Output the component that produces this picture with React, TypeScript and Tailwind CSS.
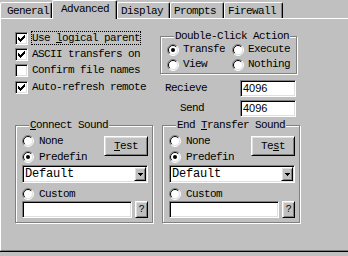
import React from "react";

const sunken =
	"bg-white border border-t-[#808080] border-l-[#808080] border-r-white border-b-white shadow-[inset_1px_1px_0_#000,inset_-1px_-1px_0_#dfdfdf]";
const raised =
	"bg-[#c0c0c0] border border-t-white border-l-white border-r-black border-b-black shadow-[inset_1px_1px_0_#dfdfdf,inset_-1px_-1px_0_#808080]";
const etched =
	"border border-[#808080] shadow-[1px_1px_0_#fff,inset_1px_1px_0_#fff]";

const Radio = ({ checked }: { checked?: boolean }) => (
	<svg width="12" height="12" viewBox="0 0 12 12" className="shrink-0">
		<circle cx="6" cy="6" r="5" fill="#fff" />
		<path d="M9.9 2.1A5.5 5.5 0 0 0 2.1 9.9" stroke="#808080" fill="none" />
		<path d="M9.9 2.1A5.5 5.5 0 0 1 2.1 9.9" stroke="#fff" fill="none" />
		<path d="M9.2 2.8A4.5 4.5 0 0 0 2.8 9.2" stroke="#000" fill="none" />
		<path d="M9.2 2.8A4.5 4.5 0 0 1 2.8 9.2" stroke="#dfdfdf" fill="none" />
		{checked && <circle cx="6" cy="6" r="2" fill="#000" />}
	</svg>
);

const Check = ({ checked }: { checked?: boolean }) => (
	<div className={`w-[13px] h-[13px] shrink-0 flex items-center justify-center ${sunken}`}>
		{checked && (
			<svg width="7" height="7" viewBox="0 0 7 7" shapeRendering="crispEdges">
				<rect x="6" y="0" width="1" height="1" />
				<rect x="5" y="1" width="2" height="1" />
				<rect x="0" y="2" width="1" height="1" />
				<rect x="4" y="2" width="3" height="1" />
				<rect x="0" y="3" width="2" height="1" />
				<rect x="3" y="3" width="3" height="1" />
				<rect x="0" y="4" width="5" height="1" />
				<rect x="1" y="5" width="3" height="1" />
				<rect x="2" y="6" width="1" height="1" />
			</svg>
		)}
	</div>
);

const Tab = ({ label, active, w, pl }: { label: string; active?: boolean; w: string; pl: string }) => (
	<div
		className={`${w} ${pl} bg-[#c0c0c0] border-t border-l border-r border-t-white border-l-white border-r-black shadow-[inset_-1px_0_0_#808080] rounded-t-[2px] leading-[12px] whitespace-nowrap ${
			active ? "h-[19px] -mb-px relative z-10 pt-[2px]" : "h-[16px] pt-[2px]"
		}`}
	>
		{label}
	</div>
);

const SoundGroup = ({ title, test }: { title: React.ReactNode; test: React.ReactNode }) => (
	<fieldset className={`w-[137px] h-[104px] pl-[6px] pr-[4px] ${etched}`}>
		<legend className="ml-[7px] px-[1px] leading-[12px] bg-[#c0c0c0]">{title}</legend>
		<div className="flex justify-between">
			<div className="pt-[2px]">
				<div className="h-[16px] flex items-center gap-[5px]">
					<Radio />
					<span>None</span>
				</div>
				<div className="h-[16px] flex items-center gap-[5px]">
					<Radio checked />
					<span className="w-[48px] overflow-hidden whitespace-nowrap">Predefin</span>
				</div>
			</div>
			<button className={`mt-[5px] w-[44px] h-[20px] leading-[12px] ${raised}`}>{test}</button>
		</div>
		<div className={`h-[18px] flex items-center justify-between pl-[2px] pr-[1px] ${sunken}`}>
			<span className="text-[12px] tracking-[-0.2px] leading-[14px]">Default</span>
			<div className={`w-[12px] h-[14px] flex items-center justify-center ${raised}`}>
				<svg width="5" height="3" viewBox="0 0 5 3" shapeRendering="crispEdges">
					<path d="M0 0h5v1h-1v1h-1v1h-1v-1h-1v-1h-1z" />
				</svg>
			</div>
		</div>
		<div className="h-[18px] flex items-end pb-[1px] gap-[5px]">
			<Radio />
			<span className="leading-[12px]">Custom</span>
		</div>
		<div className="flex gap-[3px]">
			<div className={`w-[110px] h-[17px] ${sunken}`} />
			<button className={`w-[13px] h-[17px] leading-[12px] text-[10px] ${raised}`}>?</button>
		</div>
	</fieldset>
);

export default function App() {
	return (
		<div className="w-[348px] h-[256px] overflow-hidden bg-[#c0c0c0] text-black font-['Liberation_Mono',monospace] text-[11px] tracking-[-0.6px]">
			{/* tabs */}
			<div className="h-[18px] flex items-end">
				<Tab label="General" w="w-[52px]" pl="pl-[6px]" />
				<Tab label="Advanced" w="w-[65px]" pl="pl-[8px]" active />
				<Tab label="Display" w="w-[53px]" pl="pl-[3px]" />
				<Tab label="Prompts" w="w-[54px]" pl="pl-[3px]" />
				<Tab label="Firewall" w="w-[59px]" pl="pl-[3px]" />
			</div>

			{/* panel */}
			<div className="h-[233px] border-t border-l border-b border-t-white border-l-white border-b-[#808080] shadow-[0_1px_0_#000] pl-[14px]">
				<div className="h-[100px] flex">
					<div className="w-[145px] pt-[11px]">
						<div className="h-[16px] flex items-center gap-[3px]">
							<Check checked />
							<span className="border border-dotted border-black leading-[12px]">
								Use <span className="underline">l</span>ogical parent
							</span>
						</div>
						<div className="h-[16px] flex items-center gap-[3px]">
							<Check checked />
							<span className="border border-transparent leading-[12px]">ASCII transfers on</span>
						</div>
						<div className="h-[16px] flex items-center gap-[3px]">
							<Check />
							<span className="border border-transparent leading-[12px]">Confirm file names</span>
						</div>
						<div className="h-[16px] mt-[1px] flex items-center gap-[3px]">
							<Check checked />
							<span className="border border-transparent leading-[12px]">Auto-refresh remote</span>
						</div>
					</div>

					<div className="w-[137px] pt-[12px]">
						<fieldset className={`h-[43px] pl-[6px] ${etched}`}>
							<legend className="ml-[7px] px-[1px] leading-[11px] bg-[#c0c0c0]">Double-Click Action</legend>
							<div className="grid grid-cols-[65px_auto]">
								<div className="h-[15px] flex items-center gap-[4px]">
									<Radio checked />
									<span className="w-[42px] overflow-hidden whitespace-nowrap">Transfe</span>
								</div>
								<div className="h-[15px] flex items-center gap-[4px]">
									<Radio />
									<span>Execute</span>
								</div>
								<div className="h-[15px] flex items-center gap-[4px]">
									<Radio />
									<span>View</span>
								</div>
								<div className="h-[15px] flex items-center gap-[4px]">
									<Radio />
									<span>Nothing</span>
								</div>
							</div>
						</fieldset>
						<div className="mt-[6px] flex items-center">
							<span className="w-[80px] pl-[5px]">Recieve</span>
							<div className={`w-[56px] h-[17px] pl-[2px] font-['Liberation_Sans',sans-serif] tracking-normal text-[11px] leading-[14px] ${sunken}`}>4096</div>
						</div>
						<div className="mt-[3px] flex items-center">
							<span className="w-[80px] pl-[20px]">Send</span>
							<div className={`w-[56px] h-[17px] pl-[2px] font-['Liberation_Sans',sans-serif] tracking-normal text-[11px] leading-[14px] ${sunken}`}>4096</div>
						</div>
					</div>
				</div>

				<div className="flex gap-[9px]">
					<SoundGroup
						title={<><span className="underline">C</span>onnect Sound</>}
						test={<><span className="underline">T</span>est</>}
					/>
					<SoundGroup
						title={<>End <span className="underline">T</span>ransfer Sound</>}
						test={<>Te<span className="underline">s</span>t</>}
					/>
				</div>
			</div>
		</div>
	);
}
